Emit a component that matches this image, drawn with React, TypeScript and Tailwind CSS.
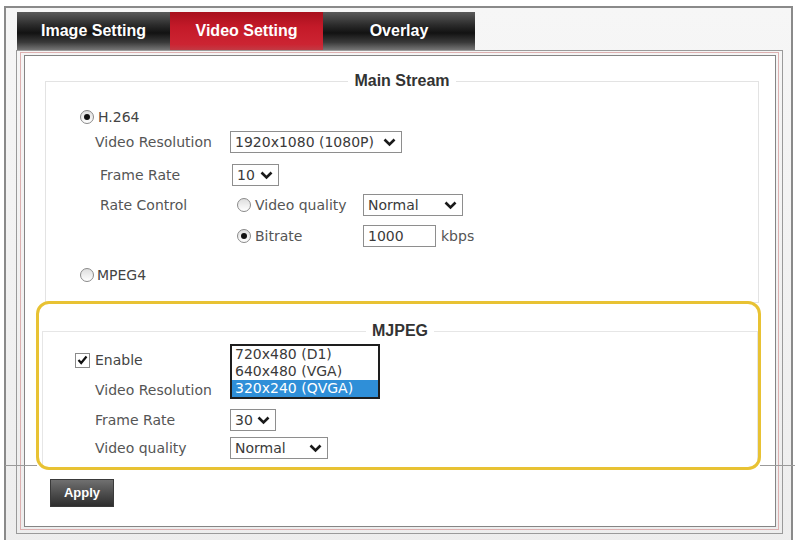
function Chevron() {
  return (
    <svg width="13" height="9" viewBox="0 0 13 9" className="shrink-0">
      <polyline points="1.5,1.5 6.5,6.5 11.5,1.5" fill="none" stroke="#1a1a1a" strokeWidth="2.6" />
    </svg>
  );
}

function Select({ value, className }: { value: string; className: string }) {
  return (
    <div
      className={`flex h-[22px] items-center justify-between border border-[#8e8e8e] bg-white pl-[4px] pr-[5px] text-[#3a3a3a] ${className}`}
    >
      <span>{value}</span>
      <Chevron />
    </div>
  );
}

function Radio({ checked }: { checked?: boolean }) {
  return (
    <span className="flex h-[14px] w-[14px] shrink-0 items-center justify-center rounded-full border border-[#8a8a8a] bg-linear-to-b from-[#dedede] to-white">
      {checked && <span className="h-[6px] w-[6px] rounded-full bg-[#111]" />}
    </span>
  );
}

function Checkbox() {
  return (
    <span className="flex h-[15px] w-[15px] shrink-0 items-center justify-center border border-[#8a8a8a] bg-white">
      <svg width="11" height="10" viewBox="0 0 11 10">
        <polyline points="1.5,5 4.2,8 9.5,1.5" fill="none" stroke="#111" strokeWidth="2.2" />
      </svg>
    </span>
  );
}

const tabDark =
  "flex items-center justify-center bg-[linear-gradient(to_bottom,#5a5a5a_0%,#2a2a2a_35%,#121212_55%,#3a3a3a_80%,#767676_100%)] text-white";

export default function App() {
  return (
    <div className="relative h-[540px] w-[795px] overflow-hidden bg-white pl-[4px] pt-[6px] font-['DejaVu_Sans',sans-serif] text-[14px] text-[#555]">
      <div className="h-[560px] w-[789px] border-2 border-[#8a8a8a] bg-[linear-gradient(to_bottom,#f6f6f6,#ededed)] pl-[10px] pt-[4px]">
        {/* tabs */}
        <div className="ml-[1px] flex h-[38px] font-['Liberation_Sans',sans-serif] text-[16px] font-bold">
          <div className={`w-[153px] ${tabDark}`}>Image Setting</div>
          <div className="flex w-[153px] items-center justify-center bg-[linear-gradient(to_bottom,#a8101d_0%,#c41a29_40%,#cc2432_85%,#c23a44_100%)] text-white">
            Video Setting
          </div>
          <div className={`w-[152px] ${tabDark}`}>Overlay</div>
        </div>

        <div className="h-[484px] w-[767px] border border-[#9a9a9a] pb-[3px] pl-[3px] pr-[3px] pt-[1px]">
          <div className="h-full border border-[#ddb0b0] pb-[2px] pl-[3px] pr-[2px] pt-[2px]">
            <div className="h-full border border-[#858585] bg-white">
              {/* Main Stream */}
              <fieldset className="ml-[20px] mt-[16px] w-[714px] border border-[#e3e3e3] pb-[16px]">
                <legend className="mx-auto px-[6px] font-['Liberation_Sans',sans-serif] text-[16px] font-bold leading-[18px] text-[#333]">
                  Main Stream
                </legend>
                <div className="mt-[16px] flex h-[22px] items-center gap-[4px] pl-[34px] text-[#444]">
                  <Radio checked />
                  <span>H.264</span>
                </div>
                <div className="mt-[3px] flex h-[22px] items-center pl-[49px]">
                  <span className="w-[135px]">Video Resolution</span>
                  <Select value="1920x1080 (1080P)" className="w-[172px]" />
                </div>
                <div className="mt-[11px] flex h-[22px] items-center pl-[54px]">
                  <span className="w-[132px]">Frame Rate</span>
                  <Select value="10" className="w-[47px]" />
                </div>
                <div className="mt-[8px] flex h-[22px] items-center pl-[54px]">
                  <span className="w-[137px]">Rate Control</span>
                  <Radio />
                  <span className="ml-[4px] w-[108px]">Video quality</span>
                  <Select value="Normal" className="w-[100px]" />
                </div>
                <div className="mt-[9px] flex h-[22px] items-center pl-[191px]">
                  <Radio checked />
                  <span className="ml-[4px] w-[108px]">Bitrate</span>
                  <div className="flex h-[22px] w-[73px] items-center border border-[#8e8e8e] pl-[4px] text-[#3a3a3a]">
                    1000
                  </div>
                  <span className="ml-[5px]">kbps</span>
                </div>
                <div className="mt-[17px] flex h-[22px] items-center gap-[3px] pl-[34px] text-[#444]">
                  <Radio />
                  <span>MPEG4</span>
                </div>
              </fieldset>

              {/* MJPEG */}
              <fieldset className="ml-[17px] mt-[19px] w-[716px] border border-b-0 border-[#e6e6e6] pb-[7px]">
                <legend className="mx-auto px-[6px] font-['Liberation_Sans',sans-serif] text-[16px] font-bold leading-[18px] text-[#333]">
                  MJPEG
                </legend>
                <div className="mt-[9px] flex h-[22px] items-center gap-[5px] pl-[32px] text-[#444]">
                  <Checkbox />
                  <span>Enable</span>
                </div>
                <div className="mt-[8px] flex h-[22px] items-center pl-[52px]">
                  <span className="w-[135px]">Video Resolution</span>
                  <div className="relative h-[22px] w-[150px]">
                    <div className="absolute bottom-[2px] left-0 w-[150px] border-2 border-[#1e1e1e] bg-white text-[#3a3a3a]">
                      <div className="h-[17px] pl-[3px] leading-[17px]">720x480 (D1)</div>
                      <div className="h-[17px] pl-[3px] leading-[17px]">640x480 (VGA)</div>
                      <div className="h-[17px] bg-[#2f8fd8] pl-[3px] leading-[17px] text-white">320x240 (QVGA)</div>
                    </div>
                  </div>
                </div>
                <div className="mt-[8px] flex h-[22px] items-center pl-[52px]">
                  <span className="w-[135px]">Frame Rate</span>
                  <Select value="30" className="w-[46px]" />
                </div>
                <div className="mt-[6px] flex h-[22px] items-center pl-[52px]">
                  <span className="w-[135px]">Video quality</span>
                  <Select value="Normal" className="w-[98px]" />
                </div>
              </fieldset>

              <button className="ml-[25px] mt-[13px] flex h-[28px] w-[64px] items-center justify-center border border-[#3a3a3a] bg-linear-to-b from-[#707070] to-[#2e2e2e] font-['Liberation_Sans',sans-serif] text-[13px] font-bold text-white">
                Apply
              </button>
            </div>
          </div>
        </div>
      </div>

      {/* separator line outside the highlight */}
      <div className="absolute left-[5px] top-[465px] h-px w-[32px] bg-[#9a9a9a]" />
      <div className="absolute left-[760px] top-[465px] h-px w-[35px] bg-[#9a9a9a]" />

      {/* yellow highlight */}
      <div className="pointer-events-none absolute left-[36px] top-[301px] h-[169px] w-[725px] rounded-[13px] border-[3px] border-[#e8c233]" />
    </div>
  );
}
